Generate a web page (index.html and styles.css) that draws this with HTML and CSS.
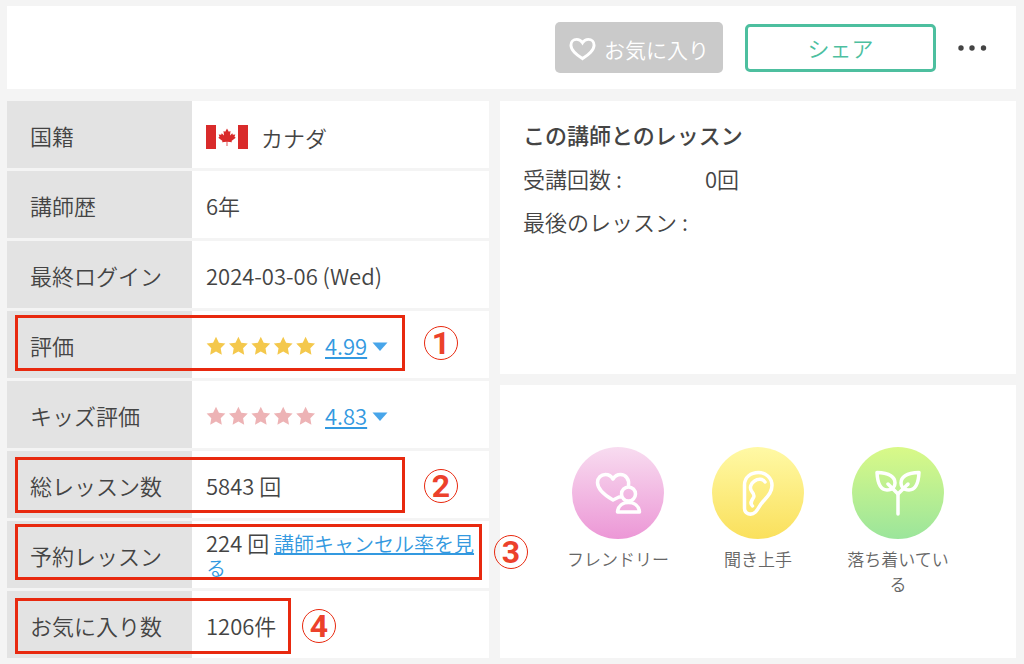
FILE: index.html
```html
<!DOCTYPE html>
<html lang="ja">
<head>
    <meta charset="UTF-8">
    <meta name="viewport" content="width=device-width, initial-scale=1.0">
    <title>講師プロフィール</title>
    <link rel="stylesheet" href="styles.css">
</head>
<body>
    <svg class="defs" aria-hidden="true">
        <defs>
            <path id="star" d="M10 0.8 L12.9 6.7 L19.4 7.6 L14.7 12.2 L15.8 18.7 L10 15.6 L4.2 18.7 L5.3 12.2 L0.6 7.6 L7.1 6.7 Z"/>
            <g id="stars">
                <use href="#star"/>
                <use href="#star" x="22.4"/>
                <use href="#star" x="44.8"/>
                <use href="#star" x="67.2"/>
                <use href="#star" x="89.6"/>
            </g>
        </defs>
    </svg>

    <header class="toolbar">
        <button type="button" class="btn btn-favorite">
            <svg class="heart" viewBox="0 0 28 24" aria-hidden="true">
                <path d="M14 22 C9 18.500 2 14 2 8 C2 4.500 4.500 2 8 2 C10.500 2 12.500 3.200 14 5.500 C15.500 3.200 17.500 2 20 2 C23.500 2 26 4.500 26 8 C26 14 19 18.500 14 22 Z"/>
            </svg>
            お気に入り
        </button>
        <button type="button" class="btn btn-share">シェア</button>
        <button type="button" class="btn-more" aria-label="その他">
            <svg viewBox="0 0 30 6" aria-hidden="true">
                <circle cx="3" cy="3" r="2.700"/>
                <circle cx="14" cy="3" r="2.700"/>
                <circle cx="25.500" cy="3" r="2.700"/>
            </svg>
        </button>
    </header>

    <main class="content">
        <table class="profile">
            <tbody>
                <tr>
                    <th scope="row">国籍</th>
                    <td>
                        <svg class="flag" viewBox="0 0 42 24" role="img" aria-label="カナダ国旗">
                            <path d="M0 0h10v24H0z M32 0h10v24H32z"/>
                            <path d="M21 3.500 L22.800 6.800 L24.500 6 L24 10.500 L26.300 8.300 L26.800 9.800 L29.300 9.400 L28.500 11.800 L29.700 12.700 L25.500 16 L26 17.300 L21.400 16.800 L21.400 21 L20.600 21 L20.600 16.800 L16 17.300 L16.500 16 L12.300 12.700 L13.500 11.800 L12.700 9.400 L15.200 9.800 L15.700 8.300 L18 10.500 L17.500 6 L19.200 6.800 Z"/>
                        </svg>
                        <span class="country">カナダ</span>
                    </td>
                </tr>
                <tr>
                    <th scope="row">講師歴</th>
                    <td>6年</td>
                </tr>
                <tr>
                    <th scope="row">最終ログイン</th>
                    <td>2024-03-06 (Wed)</td>
                </tr>
                <tr>
                    <th scope="row">評価</th>
                    <td>
                        <div class="rating">
                            <svg class="stars stars-gold" viewBox="0 0 110 20" aria-hidden="true"><use href="#stars"/></svg>
                            <a href="#">4.99</a>
                            <svg class="caret" viewBox="0 0 16 9" aria-hidden="true"><path d="M0.500 0.500h15L8 9z"/></svg>
                        </div>
                        <span class="frame frame-1"></span>
                        <span class="mark mark-1">1</span>
                    </td>
                </tr>
                <tr>
                    <th scope="row">キッズ評価</th>
                    <td>
                        <div class="rating">
                            <svg class="stars stars-pink" viewBox="0 0 110 20" aria-hidden="true"><use href="#stars"/></svg>
                            <a href="#">4.83</a>
                            <svg class="caret" viewBox="0 0 16 9" aria-hidden="true"><path d="M0.500 0.500h15L8 9z"/></svg>
                        </div>
                    </td>
                </tr>
                <tr>
                    <th scope="row">総レッスン数</th>
                    <td>
                        5843 回
                        <span class="frame frame-2"></span>
                        <span class="mark mark-2">2</span>
                    </td>
                </tr>
                <tr>
                    <th scope="row">予約レッスン</th>
                    <td class="booking">
                        224 回 <a href="#">講師キャンセル率を見る</a>
                        <span class="frame frame-3"></span>
                        <span class="mark mark-3">3</span>
                    </td>
                </tr>
                <tr>
                    <th scope="row">お気に入り数</th>
                    <td>
                        1206件
                        <span class="frame frame-4"></span>
                        <span class="mark mark-4">4</span>
                    </td>
                </tr>
            </tbody>
        </table>

        <div class="side">
            <section class="card history">
                <h2>この講師とのレッスン</h2>
                <dl>
                    <dt>受講回数 :</dt>
                    <dd>0回</dd>
                    <dt>最後のレッスン :</dt>
                    <dd></dd>
                </dl>
            </section>

            <section class="card">
                <ul class="tags">
                    <li>
                        <span class="tag-icon friendly">
                            <svg viewBox="0 0 92 92" aria-hidden="true">
                                <path d="M49 50 L47 50 L41 53 C34 49 25.500 43 25.500 35.500 C25.500 31 29 27.500 33.500 27.500 C37 27.500 39.500 29.500 41 32 C42.500 29.500 45 27.500 48.500 27.500 C53.500 27.500 57.500 32 56.500 38.500"/>
                                <circle cx="56.500" cy="47" r="7"/>
                                <path d="M45.500 65 C46 59 50.500 55.500 56.500 55.500 C62.500 55.500 67 59 67.500 65 Z"/>
                            </svg>
                        </span>
                        フレンドリー
                    </li>
                    <li>
                        <span class="tag-icon listener">
                            <svg viewBox="0 0 92 92" aria-hidden="true">
                                <path d="M32.500 38 C32.500 30 39 25.500 46.500 25.500 C54 25.500 60 31 60 38.500 C60 46 55 50 51 54.500 C47 59 46.500 62 43.500 65 C39 69 32.500 67 32.500 61 Z"/>
                                <path d="M53 35 C51 31.500 46 31.500 42.500 34 C38.500 36.500 37.500 41 39.500 44 C41.500 46.500 43 48 41.500 50.500 C39.500 53.500 37.500 56.500 40.500 59"/>
                            </svg>
                        </span>
                        聞き上手
                    </li>
                    <li>
                        <span class="tag-icon calm">
                            <svg viewBox="0 0 92 92" aria-hidden="true">
                                <path d="M46 67 V47 L36 37"/>
                                <path d="M25 25.500 C37 26 43 29.500 43 36 C43 39.500 41 43 35 43 C28 43 25.500 36 25 25.500 Z"/>
                                <path d="M46 47 L56 37"/>
                                <path d="M67 25.500 C55 26 49 29.500 49 36 C49 39.500 51 43 57 43 C64 43 66.500 36 67 25.500 Z"/>
                            </svg>
                        </span>
                        落ち着いている
                    </li>
                </ul>
            </section>
        </div>
    </main>
</body>
</html>
```
FILE: styles.css
```css
:root {
    --text-color: #444;
    --link-color: #3399e0;
    --green: #4dbf9f;
    --red: #e8290f;
    --page-bg: #f4f4f4;
    --label-bg: #e3e3e3;
}

* {
    box-sizing: border-box;
    margin: 0;
    padding: 0;
}

body {
    font-family: "Noto Sans CJK JP", sans-serif;
    font-size: 22px;
    font-weight: 350;
    line-height: 32px;
    color: var(--text-color);
    background: var(--page-bg);
    padding: 6px 8px 6px 7px;
}

a {
    color: var(--link-color);
}

button {
    font-family: inherit;
    font-weight: inherit;
    cursor: pointer;
}

.defs {
    position: absolute;
    width: 0;
    height: 0;
}

.toolbar {
    display: flex;
    align-items: center;
    justify-content: flex-end;
    background: #fff;
    padding: 16px 28px 16px 16px;
    margin-bottom: 12px;
}

.btn {
    display: flex;
    align-items: center;
    justify-content: center;
    border-radius: 5px;
    margin-right: 22px;
}

.btn-favorite {
    width: 168px;
    height: 51px;
    padding-top: 2px;
    gap: 8px;
    border: none;
    background: #cacaca;
    color: #fff;
    font-size: 21px;
}

.heart {
    width: 27px;
    height: 24px;
    fill: none;
    stroke: #fff;
    stroke-width: 3;
}

.btn-share {
    width: 191px;
    height: 48px;
    padding-bottom: 2px;
    border: 3px solid var(--green);
    background: #fff;
    color: var(--green);
    font-size: 22px;
}

.btn-more {
    width: 30px;
    height: 30px;
    border: none;
    background: none;
}

.btn-more svg {
    display: block;
    width: 30px;
    height: 6px;
    fill: var(--text-color);
}

.content {
    display: grid;
    grid-template-columns: 482fr 516fr;
    gap: 11px;
}

/* プロフィール表 */
.profile {
    width: 100%;
    border-spacing: 0;
    table-layout: fixed;
}

.profile tr {
    position: relative;
    height: 70px;
}

.profile tr:last-child {
    height: 67px;
}

.profile th,
.profile td {
    border-bottom: 3px solid var(--page-bg);
}

.profile tr:last-child th,
.profile tr:last-child td {
    border-bottom: none;
}

.profile th {
    width: 185px;
    padding-left: 23px;
    background: var(--label-bg);
    font-weight: inherit;
    text-align: left;
}

.profile td {
    padding: 0 14px;
    background: #fff;
}

.flag {
    width: 42px;
    height: 24px;
    fill: #d92b2b;
    vertical-align: middle;
}

.country {
    margin-left: 8px;
    vertical-align: middle;
}

.rating {
    display: flex;
    align-items: center;
}

.rating svg {
    margin-top: 3px;
}

.stars {
    width: 110px;
    height: 20px;
    margin-right: 9px;
}

.stars-gold {
    fill: #f4c84c;
}

.stars-pink {
    fill: #edb3b5;
}

.caret {
    width: 16px;
    height: 9px;
    margin-left: 5px;
    fill: #47a5ea;
}

.profile .booking {
    line-height: 22px;
}

.booking a {
    font-size: 20px;
}

/* 番号付きの赤枠 */
.frame {
    position: absolute;
    left: 8px;
    height: 56px;
    border: 3px solid var(--red);
}

.frame-1 {
    top: 4px;
    width: 390px;
}

.frame-2 {
    top: 6px;
    width: 390px;
}

.frame-3 {
    top: 3px;
    width: 467px;
}

.frame-4 {
    top: 7px;
    width: 276px;
}

.mark {
    position: absolute;
    width: 34px;
    height: 34px;
    border: 1px solid var(--red);
    border-radius: 50%;
    color: #ec412b;
    font-family: Roboto, sans-serif;
    font-size: 32px;
    font-weight: bold;
    line-height: 33px;
    text-align: center;
}

.mark-1 {
    top: 15px;
    left: 417px;
}

.mark-2 {
    top: 18px;
    left: 417px;
}

.mark-3 {
    top: 14px;
    left: 487px;
}

.mark-4 {
    top: 18px;
    left: 295px;
}

/* 右カラム */
.side {
    display: grid;
    grid-template-rows: 1fr 1fr;
    gap: 11px;
}

.card {
    background: #fff;
}

.history {
    padding: 17px 23px;
}

.history h2 {
    margin-bottom: 12px;
    font-size: 22px;
    font-weight: 500;
}

.history dl {
    display: grid;
    grid-template-columns: 182px 1fr;
    grid-auto-rows: 32px;
    row-gap: 11px;
}

.tags {
    display: flex;
    justify-content: center;
    gap: 38px;
    padding-top: 62px;
    list-style: none;
}

.tags li {
    width: 102px;
    color: #666;
    font-size: 17px;
    line-height: 25px;
    text-align: center;
}

.tag-icon {
    display: block;
    width: 92px;
    height: 92px;
    margin: 0 auto 7px;
    border-radius: 50%;
}

.tag-icon svg {
    display: block;
    fill: none;
    stroke: #fff;
    stroke-width: 3.5;
    stroke-linecap: round;
    stroke-linejoin: round;
}

.friendly {
    background: linear-gradient(#f8dcf0, #ec97d6);
}

.listener {
    background: linear-gradient(#fff9a5, #fae05c);
}

.calm {
    background: linear-gradient(#d9f988, #9be59b);
}
```
